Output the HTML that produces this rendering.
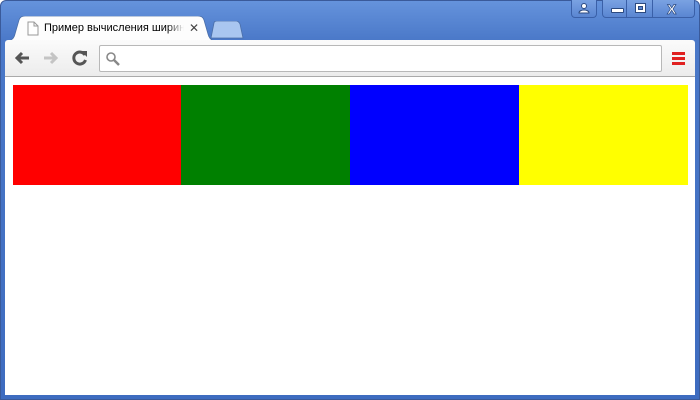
<!DOCTYPE html>
<html><head><meta charset="utf-8"><style>
*{margin:0;padding:0;box-sizing:border-box}
body{width:700px;height:400px;overflow:hidden;background:#fff;font-family:"Liberation Sans","DejaVu Sans",sans-serif}
.frame{position:absolute;left:0;top:0;width:700px;height:400px;background:linear-gradient(#6593dc,#4a78c8 40px,#3e6cc0);border-radius:6px 6px 0 0;border:1px solid #3a5a9a}
.tb{position:absolute;left:5px;top:40px;width:690px;height:37px;background:linear-gradient(#fbfbfb,#ececec);border-bottom:1px solid #aaa;border-radius:3px 3px 0 0}
.page{position:absolute;left:5px;top:77px;width:690px;height:318px;background:#fff}
.addr{position:absolute;left:99px;top:45px;width:563px;height:27px;background:#fff;border:1px solid #b8b8b8;border-radius:2px}
.wb{position:absolute;top:0;height:18px;border:1px solid #3a60a8;border-top:none;border-radius:0 0 4px 4px;background:linear-gradient(#7aa2e2,#5a86d2)}
</style></head><body>
<div class="frame"></div>
<svg viewBox="0 0 210 25" width="210" height="25" style="position:absolute;left:6px;top:16px">
<path d="M0 25 C6 25 8 22 9 18 L13 4 C14 1 16 0 19 0 L192 0 C195 0 197 1 198 4 L202 18 C203 22 205 25 210 25 Z" fill="#fdfdfd" stroke="#4b6fa8" stroke-width="0.8"/>
</svg>
<svg style="position:absolute;left:210px;top:21px" width="34" height="18"><path d="M1 17 L4 2 C4 1 5 0 7 0 L26 0 C28 0 29 1 30 3 L33 17 Z" fill="#a9c6f0" stroke="#4b6fa8" stroke-width="0.8"/></svg>
<svg style="position:absolute;left:27px;top:21px" width="12" height="15"><path d="M1 1 H7 L11 5 V14 H1 Z" fill="#fff" stroke="#999"/><path d="M7 1 V5 H11" fill="none" stroke="#999"/></svg>
<div style="position:absolute;left:44px;top:22px;font-size:11px;color:#000;width:140px;overflow:hidden;white-space:nowrap;-webkit-mask-image:linear-gradient(90deg,#000 88%,transparent)">Пример вычисления ширины</div>
<div style="position:absolute;left:189px;top:21px;font-size:12px;color:#444;font-weight:bold">✕</div>
<div class="wb" style="left:571px;width:26px"><svg width="24" height="16"><circle cx="12" cy="6" r="2.5" fill="#fff" stroke="#2c4a80"/><path d="M7 13 C7 9 17 9 17 13 Z" fill="#fff" stroke="#2c4a80"/></svg></div>
<div class="wb" style="left:602px;width:93px"></div>
<div style="position:absolute;left:611px;top:8px;width:13px;height:5px;background:#fff;border:1px solid #2c4a80;border-radius:1px"></div>
<div style="position:absolute;left:626px;top:0;width:1px;height:18px;background:#3a60a8"></div>
<div style="position:absolute;left:635px;top:3px;width:11px;height:10px;background:#fff;border:1px solid #2c4a80"></div><div style="position:absolute;left:638px;top:6px;width:5px;height:4px;background:#5a86d2;border:1px solid #2c4a80"></div>
<div style="position:absolute;left:652px;top:0;width:1px;height:18px;background:#3a60a8"></div>
<div style="position:absolute;left:667px;top:1px;font-size:14px;font-weight:bold;color:#fff;-webkit-text-stroke:0.7px #2c4a80">X</div>
<div class="tb"></div>
<svg style="position:absolute;left:13px;top:50px" width="18" height="16"><path d="M16 8 H4 M9 3 L4 8 L9 13" fill="none" stroke="#555" stroke-width="3"/></svg>
<svg style="position:absolute;left:42px;top:50px" width="18" height="16"><path d="M2 8 H14 M9 3 L14 8 L9 13" fill="none" stroke="#c4c4c4" stroke-width="3"/></svg>
<svg style="position:absolute;left:71px;top:49px" width="18" height="18"><path d="M14 6 A6 6 0 1 0 14.5 11" fill="none" stroke="#555" stroke-width="3"/><path d="M10 2 L16 2 L16 8 Z" fill="#555"/></svg>
<div class="addr"></div>
<svg style="position:absolute;left:105px;top:51px" width="16" height="16"><circle cx="6" cy="6" r="4" fill="none" stroke="#888" stroke-width="1.6"/><path d="M9 9 L14 14" stroke="#888" stroke-width="2.5"/></svg>
<div style="position:absolute;left:672px;top:52px;width:13px;height:3px;background:#e02020"></div>
<div style="position:absolute;left:672px;top:57px;width:13px;height:3px;background:#e02020"></div>
<div style="position:absolute;left:672px;top:62px;width:13px;height:3px;background:#e02020"></div>
<div class="page"></div>
<div style="position:absolute;left:13px;top:85px;width:168px;height:100px;background:red"></div>
<div style="position:absolute;left:181px;top:85px;width:169px;height:100px;background:green"></div>
<div style="position:absolute;left:350px;top:85px;width:169px;height:100px;background:blue"></div>
<div style="position:absolute;left:519px;top:85px;width:169px;height:100px;background:yellow"></div>
</body></html>
